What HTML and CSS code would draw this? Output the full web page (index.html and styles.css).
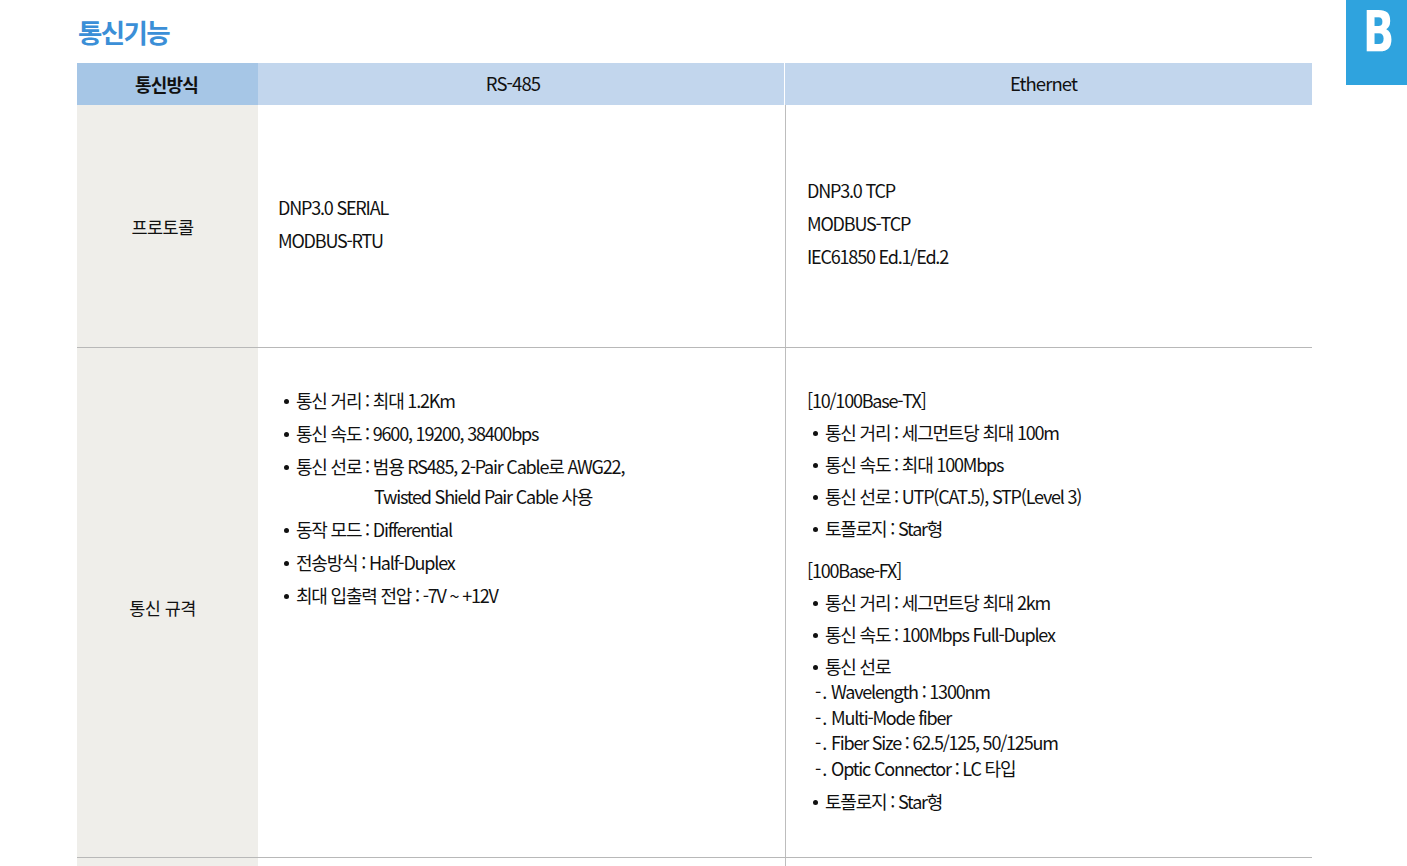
FILE: index.html
```html
<!DOCTYPE html>
<html lang="ko">
<head>
<meta charset="utf-8">
<title>통신기능</title>
<link rel="stylesheet" href="styles.css">
</head>
<body>
<div class="page">
  <h1 class="title">통신기능</h1>
  <div class="badge"><span>B</span></div>

  <div class="spec">
    <div class="row head">
      <div class="cell h-label">통신방식</div>
      <div class="cell h-col h-rs">RS-485</div>
      <div class="cell h-col h-eth">Ethernet</div>
    </div>

    <div class="row r1">
      <div class="cell label">프로토콜</div>
      <div class="cell body rs center">
        <p class="ln">DNP3.0 SERIAL</p>
        <p class="ln">MODBUS-RTU</p>
      </div>
      <div class="cell body eth center">
        <p class="ln">DNP3.0 TCP</p>
        <p class="ln">MODBUS-TCP</p>
        <p class="ln">IEC61850 Ed.1/Ed.2</p>
      </div>
    </div>

    <div class="row r2">
      <div class="cell label label-low">통신 규격</div>
      <div class="cell body rs top">
        <ul class="list">
          <li>통신 거리 : 최대 1.2Km</li>
          <li>통신 속도 : 9600, 19200, 38400bps</li>
          <li>통신 선로 : 범용 RS485, 2-Pair Cable로 AWG22,<br><span class="hang">Twisted Shield Pair Cable 사용</span></li>
          <li>동작 모드 : Differential</li>
          <li>전송방식 : Half-Duplex</li>
          <li>최대 입출력 전압 : -7V ~ +12V</li>
        </ul>
      </div>
      <div class="cell body eth top">
        <p class="group">[10/100Base-TX]</p>
        <ul class="list list-eth">
          <li>통신 거리 : 세그먼트당 최대 100m</li>
          <li>통신 속도 : 최대 100Mbps</li>
          <li>통신 선로 : UTP(CAT.5), STP(Level 3)</li>
          <li>토폴로지 : Star형</li>
        </ul>
        <p class="group group-2">[100Base-FX]</p>
        <ul class="list list-eth">
          <li>통신 거리 : 세그먼트당 최대 2km</li>
          <li>통신 속도 : 100Mbps Full-Duplex</li>
          <li>통신 선로
            <ul class="dash">
              <li>Wavelength : 1300nm</li>
              <li>Multi-Mode fiber</li>
              <li>Fiber Size : 62.5/125, 50/125um</li>
              <li>Optic Connector : LC 타입</li>
            </ul>
          </li>
          <li class="after-dash">토폴로지 : Star형</li>
        </ul>
      </div>
    </div>

    <div class="row r3">
      <div class="cell label"></div>
      <div class="cell body rs"></div>
      <div class="cell body eth"></div>
    </div>
  </div>
</div>
</body>
</html>
```

FILE: styles.css
```css
* { box-sizing: border-box; }
html, body {
  margin: 0;
  padding: 0;
  background: #ffffff;
}
body {
  font-family: "Noto Sans CJK KR", "Noto Sans", sans-serif;
  color: #111111;
  overflow: hidden;
  height: 866px;
}
.page {
  position: relative;
  padding-left: 77px;
  padding-top: 12px;
  width: 1407px;
}
.title {
  margin: 0 0 11px 1px;
  height: 40px;
  line-height: 40px;
  font-size: 26.5px;
  font-weight: 700;
  letter-spacing: -1.6px;
  color: #3b8fd7;
}
.badge {
  position: absolute;
  top: 0;
  right: 0;
  width: 61px;
  height: 85px;
  background: #2fa3de;
  display: flex;
  justify-content: center;
  align-items: flex-start;
}
.badge span {
  display: block;
  color: #ffffff;
  font-family: "DejaVu Sans", "Noto Sans", sans-serif;
  font-weight: 700;
  font-size: 57px;
  line-height: normal;
  margin-left: 4px;
  margin-top: -1px;
  transform: scaleX(0.72);
}
.spec {
  width: 1235px;
}
.row {
  display: grid;
  grid-template-columns: 181px 527px 527px;
}
.head {
  height: 42px;
}
.cell {
  margin: 0;
}
.h-label {
  background: #a6c6e6;
  font-weight: 700;
  font-size: 18px;
  letter-spacing: -0.8px;
  display: flex;
  align-items: center;
  justify-content: center;
  padding-right: 2px;
}
.h-col {
  background: #c2d6ed;
  font-size: 18.5px;
  letter-spacing: -0.9px;
  display: flex;
  align-items: center;
  justify-content: center;
  padding-bottom: 2px;
}
.h-rs {
  border-right: 1px solid #ffffff;
  padding-right: 16px;
}
.h-eth {
  padding-right: 10px;
}
.r1 {
  height: 243px;
  border-bottom: 1px solid #b8b8b8;
}
.r2 {
  height: 510px;
  border-bottom: 1px solid #b8b8b8;
}
.r3 {
  height: 40px;
}
.label {
  background: #efeeea;
  display: flex;
  align-items: center;
  justify-content: center;
  font-size: 17.5px;
  letter-spacing: -0.6px;
  padding-right: 10px;
}
.label-low {
  padding-top: 10px;
}
.body {
  font-size: 18px;
  letter-spacing: -1.2px;
}
.rs {
  padding-left: 20px;
}
.eth {
  border-left: 1px solid #bdbdbd;
  padding-left: 21px;
}
.center {
  display: flex;
  flex-direction: column;
  justify-content: center;
  padding-bottom: 5px;
}
.ln {
  margin: 0;
  line-height: 33px;
}
.top {
  padding-top: 37px;
}
.list {
  list-style: none;
  margin: 0;
  padding: 0;
}
.list > li {
  position: relative;
  padding-left: 18px;
  line-height: 30px;
  margin-top: 3px;
}
.list > li:first-child {
  margin-top: 0;
}
.list > li::before {
  content: "";
  position: absolute;
  left: 6px;
  top: 14px;
  width: 5px;
  height: 5px;
  border-radius: 50%;
  background: #111111;
}
.hang {
  display: inline-block;
  padding-left: 78px;
}
.group {
  margin: 0;
  line-height: 30px;
}
.group-2 {
  margin-top: 12px;
}
.list-eth > li,
.list-eth > li:first-child {
  margin-top: 2px;
}
.dash {
  list-style: none;
  margin: -2px 0 0 -10px;
  padding: 0;
}
.dash li {
  line-height: 25.7px;
  padding-left: 16px;
  position: relative;
}
.dash li::before {
  content: "-.";
  position: absolute;
  left: 0;
  top: 0;
  letter-spacing: 1px;
}
.list-eth > li.after-dash {
  margin-top: 4px;
}
```
